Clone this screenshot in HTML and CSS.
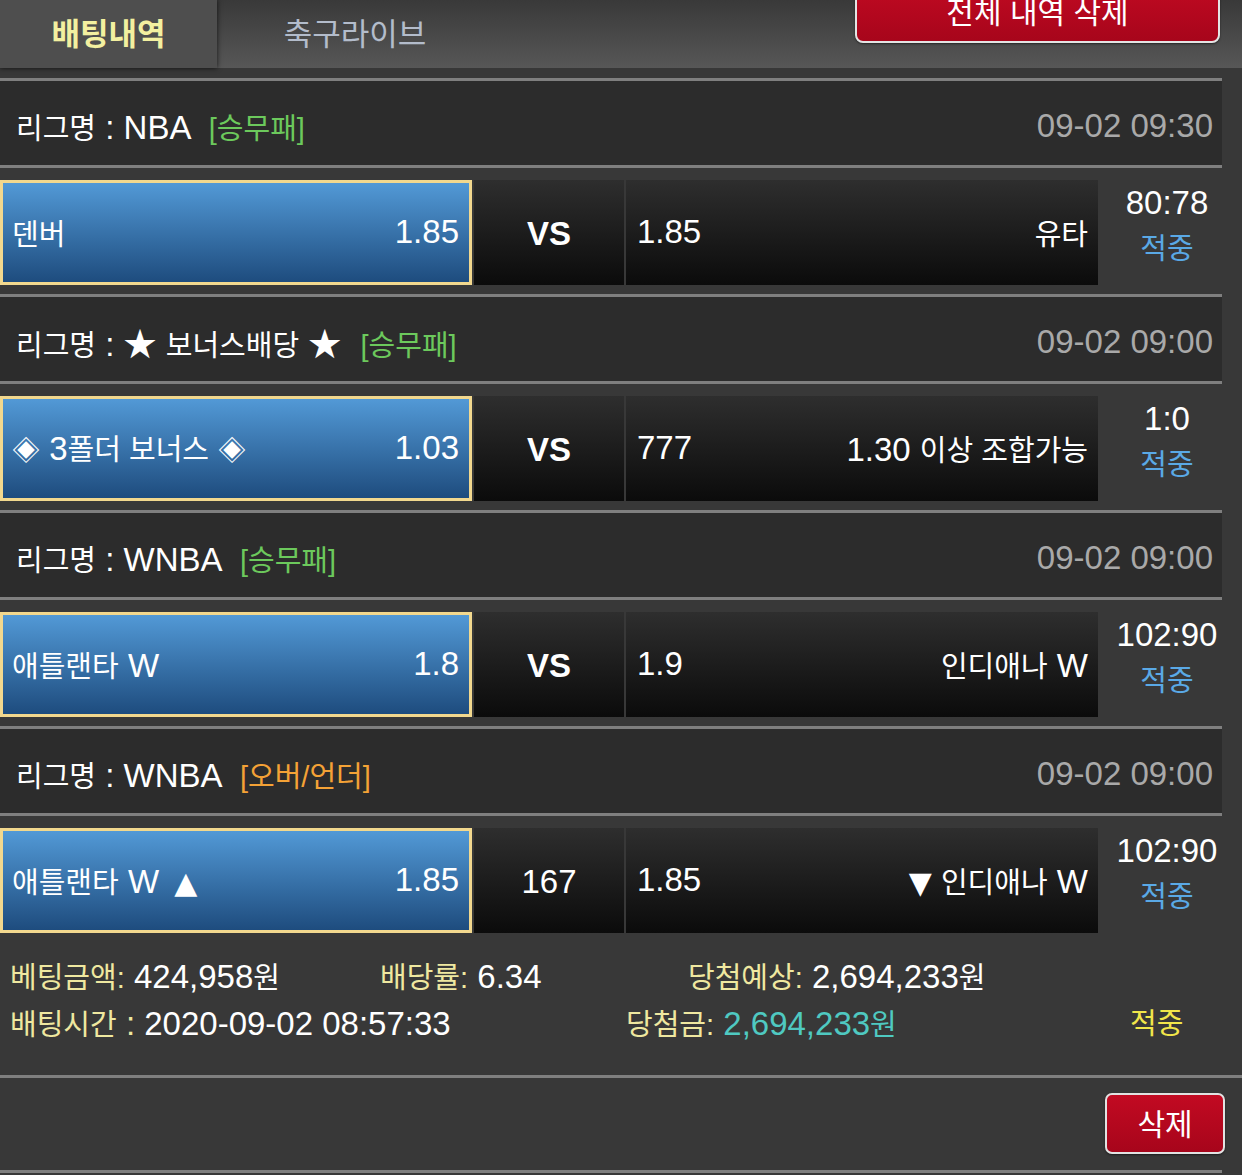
FILE: index.html
```html
<!DOCTYPE html>
<html lang="ko">
<head>
<meta charset="utf-8">
<title>배팅내역</title>
<link rel="stylesheet" href="styles.css">
</head>
<body>
<header class="topbar">
  <div class="tab active">배팅내역</div>
  <div class="tab live">축구라이브</div>
  <button class="btn-all">전체 내역 삭제</button>
</header>

<main class="list">
  <section class="game">
    <div class="league">
      <span class="lname"><span class="k">리그명</span> : NBA <span class="type green"><span class="k">[승무패]</span></span></span>
      <span class="date">09-02 09:30</span>
    </div>
    <div class="match">
      <div class="home"><span class="k">덴버</span><span>1.85</span></div>
      <div class="mid vs">VS</div>
      <div class="away"><span>1.85</span><span class="k">유타</span></div>
      <div class="result"><div>80:78</div><div class="hit k">적중</div></div>
    </div>
  </section>

  <section class="game">
    <div class="league">
      <span class="lname"><span class="k">리그명</span> : ★ <span class="k">보너스배당</span> ★ <span class="type green"><span class="k">[승무패]</span></span></span>
      <span class="date">09-02 09:00</span>
    </div>
    <div class="match">
      <div class="home"><span><span class="dia">◈</span> 3<span class="k">폴더 보너스</span> <span class="dia">◈</span></span><span>1.03</span></div>
      <div class="mid vs">VS</div>
      <div class="away"><span>777</span><span>1.30 <span class="k">이상 조합가능</span></span></div>
      <div class="result"><div>1:0</div><div class="hit k">적중</div></div>
    </div>
  </section>

  <section class="game">
    <div class="league">
      <span class="lname"><span class="k">리그명</span> : WNBA <span class="type green"><span class="k">[승무패]</span></span></span>
      <span class="date">09-02 09:00</span>
    </div>
    <div class="match">
      <div class="home"><span><span class="k">애틀랜타</span> W</span><span>1.8</span></div>
      <div class="mid vs">VS</div>
      <div class="away"><span>1.9</span><span><span class="k">인디애나</span> W</span></div>
      <div class="result"><div>102:90</div><div class="hit k">적중</div></div>
    </div>
  </section>

  <section class="game">
    <div class="league">
      <span class="lname"><span class="k">리그명</span> : WNBA <span class="type orange"><span class="k">[오버/언더]</span></span></span>
      <span class="date">09-02 09:00</span>
    </div>
    <div class="match">
      <div class="home"><span><span class="k">애틀랜타</span> W <span class="tri up">▲</span></span><span>1.85</span></div>
      <div class="mid">167</div>
      <div class="away"><span>1.85</span><span><span class="tri">▼</span> <span class="k">인디애나</span> W</span></div>
      <div class="result"><div>102:90</div><div class="hit k">적중</div></div>
    </div>
  </section>
</main>

<div class="summary">
  <div class="srow">
    <span class="cell c1"><span class="lbl k">베팅금액:</span> 424,958<span class="k">원</span></span>
    <span class="cell c2"><span class="lbl k">배당률:</span> 6.34</span>
    <span class="cell"><span class="lbl k">당첨예상:</span> 2,694,233<span class="k">원</span></span>
  </div>
  <div class="srow">
    <span class="cell d1"><span class="lbl"><span class="k">배팅시간</span> :</span> 2020-09-02 08:57:33</span>
    <span class="cell d2"><span class="lbl k">당첨금:</span> <span class="win">2,694,233<span class="k">원</span></span></span>
    <span class="cell final k">적중</span>
  </div>
</div>

<div class="actions">
  <button class="btn-del">삭제</button>
</div>
<div class="endline"></div>
</body>
</html>
```

FILE: styles.css
```css
* {
  box-sizing: border-box;
}

body {
  margin: 0;
  width: 1242px;
  height: 1175px;
  overflow: hidden;
  background: #383838;
  color: #ffffff;
  font-family: "Liberation Sans", "Noto Sans CJK KR", sans-serif;
  font-size: 33px;
}

.k {
  font-size: 29px;
}

.dia {
  font-family: "Noto Sans CJK KR", sans-serif;
  font-size: 28px;
}

.tri {
  font-family: "DejaVu Sans", sans-serif;
  font-size: 30px;
}

.tri.up {
  margin-left: 6px;
}

/* top bar */
.topbar {
  display: flex;
  height: 68px;
  background: linear-gradient(#393939, #575757);
}

.tab {
  height: 68px;
  display: flex;
  align-items: center;
  justify-content: center;
  padding-bottom: 6px;
  font-size: 31px;
  color: #b3bccb;
}

.tab.active {
  width: 217px;
  background: #4e4e4e;
  box-shadow: 0 0 5px rgba(0, 0, 0, 0.75);
  color: #f3f0a0;
  font-weight: bold;
}

.tab.live {
  width: 276px;
}

.btn-all {
  margin-left: auto;
  margin-right: 22px;
  margin-top: -20px;
  width: 365px;
  height: 63px;
  border: 2px solid #e4e4e4;
  border-radius: 8px;
  background: linear-gradient(#c20a22, #a7051b);
  color: #ffffff;
  font-family: inherit;
  font-size: 30px;
  padding: 0 0 4px;
  box-shadow: 0 1px 2px rgba(0, 0, 0, 0.5);
}

/* list */
.list {
  width: 1222px;
  margin-top: 10px;
}

.league {
  display: flex;
  justify-content: space-between;
  align-items: center;
  height: 90px;
  padding: 6px 9px 0 16px;
  background: #2c2c2c;
  border-top: 3px solid #7f7f7f;
  border-bottom: 3px solid #7f7f7f;
}

.type {
  margin-left: 10px;
}

.green {
  color: #6cc95c;
}

.orange {
  color: #f4a236;
}

.date {
  color: #a9a9a9;
}

.match {
  display: flex;
  align-items: flex-start;
  height: 126px;
  padding-top: 12px;
}

.home {
  width: 472px;
  height: 105px;
  border: 3px solid #f2d88e;
  background: linear-gradient(#5299d6, #1e4c7e);
  display: flex;
  justify-content: space-between;
  align-items: center;
  padding: 0 10px 2px 9px;
}

.mid {
  width: 150px;
  height: 105px;
  margin-left: 2px;
  background: linear-gradient(#2e2e2e, #0b0b0b);
  display: flex;
  align-items: center;
  justify-content: center;
  padding-top: 2px;
}

.mid.vs {
  font-weight: bold;
}

.away {
  width: 472px;
  height: 105px;
  margin-left: 2px;
  background: linear-gradient(#2e2e2e, #0b0b0b);
  display: flex;
  justify-content: space-between;
  align-items: center;
  padding: 0 10px 2px 11px;
}

.result {
  width: 124px;
  padding: 0 0 0 14px;
  line-height: 46px;
  text-align: center;
}

.hit {
  color: #5aa9e6;
}

/* summary */
.summary {
  height: 133px;
  padding: 12px 0 0 10px;
  line-height: 46px;
}

.srow {
  display: flex;
}

.cell {
  white-space: nowrap;
}

.c1 {
  width: 370px;
}

.c2 {
  width: 308px;
}

.d1 {
  width: 616px;
}

.d2 {
  width: 504px;
}

.lbl {
  color: #efe8a0;
}

.win {
  color: #4fc9c1;
}

.final {
  color: #f1e64a;
}

.actions {
  height: 95px;
  border-top: 3px solid #7f7f7f;
  display: flex;
  justify-content: flex-end;
  align-items: flex-start;
  padding: 15px 17px 0 0;
}

.btn-del {
  width: 120px;
  height: 61px;
  border: 2px solid #e2e2e2;
  border-radius: 7px;
  background: linear-gradient(#c20a22, #a7051b);
  color: #ffffff;
  font-family: inherit;
  font-size: 30px;
  padding: 0 0 4px;
  box-shadow: 0 1px 2px rgba(0, 0, 0, 0.5);
}

.endline {
  width: 1222px;
  border-top: 3px solid #7f7f7f;
}
```
